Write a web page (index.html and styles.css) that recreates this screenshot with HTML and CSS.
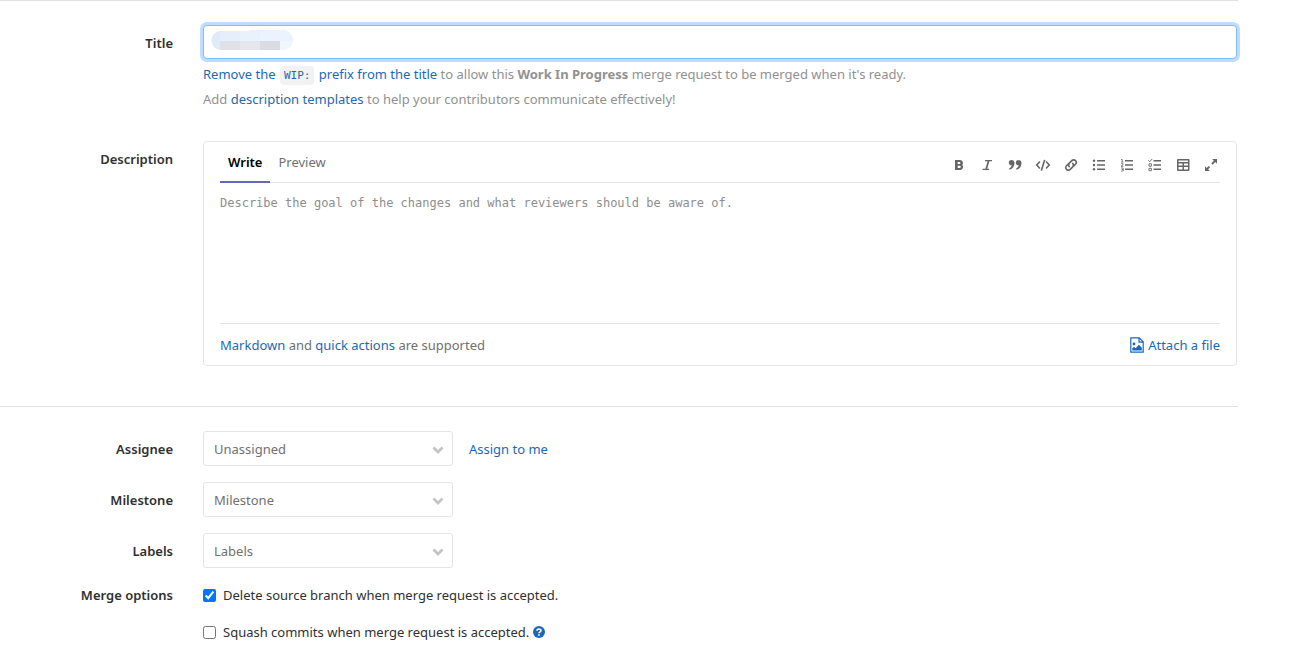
FILE: index.html
```html
<!DOCTYPE html>
<html lang="en">
<head>
<meta charset="utf-8">
<title>New Merge Request</title>
<link rel="stylesheet" href="styles.css">
</head>
<body>
<form class="form">
  <section class="section section-main">
    <div class="row">
      <label class="label" for="title">Title</label>
      <div class="field">
        <div class="title-box">
          <input class="title-input" id="title" type="text">
          <svg class="title-mask" width="82" height="20" viewBox="0 0 82 20" aria-hidden="true">
            <clipPath id="pill"><path d="M10 1h28V0h34a10 10 0 0 1 0 20H10A9.500 9.500 0 0 1 10 1z"/></clipPath>
            <g clip-path="url(#pill)">
              <path fill="#e9f2fc" d="M0 0h82v20H0z"/>
              <path fill="#dfebfa" d="M0 0h9v20H0z"/>
              <path fill="#e5eefa" d="M9 0h20v11H9z"/>
              <path fill="#ebf4fe" d="M49 0h33v11H49z"/>
              <path fill="#f1f6fc" d="M69 11h13v9H69z"/>
              <path fill="#dfe1e6" d="M9 11h20v9H9z"/>
              <path fill="#e5e7ec" d="M29 11h20v9H29z"/>
              <path fill="#d9dce2" d="M49 11h20v9H49z"/>
            </g>
          </svg>
        </div>
        <p class="hint"><a href="#">Remove the <code class="code">WIP:</code> prefix from the title</a> to allow this <strong>Work In Progress</strong> merge request to be merged when it's ready.</p>
        <p class="hint">Add <a href="#">description templates</a> to help your contributors communicate effectively!</p>
      </div>
    </div>
    <div class="row">
      <label class="label label-description" for="description">Description</label>
      <div class="field editor">
        <div class="editor-head">
          <div class="tabs">
            <button class="tab tab-active" type="button">Write</button>
            <button class="tab" type="button">Preview</button>
          </div>
          <div class="toolbar">
            <button class="tool" type="button" aria-label="Bold"><svg class="icon" viewBox="0 0 16 16"><path fill-rule="evenodd" d="M4 3h5a3 3 0 0 1 2.300 4.900A3.100 3.100 0 0 1 9.600 13H4zm2.700 2v2h1.700a1 1 0 0 0 0-2zm0 3.800V11h2a1.100 1.100 0 0 0 0-2.200z"/></svg></button>
            <button class="tool" type="button" aria-label="Italic"><svg class="icon" viewBox="0 0 16 16"><path d="M6 3h7v1.300h-2.600L8.200 11.700H10V13H3.500v-1.300h2.900l2.200-7.400H6z"/></svg></button>
            <button class="tool" type="button" aria-label="Quote"><svg class="icon" viewBox="0 0 16 16"><path d="M4.500 3A2.700 2.700 0 0 0 1.800 5.700c0 1.500 1.100 2.600 2.500 2.600h.4C4.500 9.700 3.700 10.600 2.300 11.300v1.500C5.500 12 7.500 9.500 7.500 6.200 7.500 4.200 6.300 3 4.500 3zm7 0A2.700 2.700 0 0 0 8.800 5.700c0 1.500 1.100 2.600 2.500 2.600h.4c-.2 1.400-1 2.300-2.400 3v1.500c3.200-.8 5.200-3.300 5.200-6.600 0-2-1.200-3.200-3-3.200z"/></svg></button>
            <button class="tool" type="button" aria-label="Code"><svg class="icon line" viewBox="0 0 16 16"><path d="M4.500 5 1.700 8l2.800 3M11.500 5l2.800 3-2.800 3M9.500 3.500l-3 9.500"/></svg></button>
            <button class="tool" type="button" aria-label="Link"><svg class="icon line" viewBox="0 0 16 16"><path d="M6.300 9.700a2.700 2.700 0 0 1 0-3.600l2.500-2.500a2.600 2.600 0 0 1 3.700 3.700l-1.700 1.700M9.700 6.300a2.700 2.700 0 0 1 0 3.600l-2.500 2.500a2.600 2.600 0 0 1-3.700-3.700l1.700-1.700"/></svg></button>
            <button class="tool" type="button" aria-label="Bulleted list"><svg class="icon" viewBox="0 0 16 16"><path d="M6 3h8v1.600H6zm0 4.200h8v1.600H6zm0 4.200h8V13H6z"/><circle cx="3" cy="3.800" r="1.200"/><circle cx="3" cy="8" r="1.200"/><circle cx="3" cy="12.200" r="1.200"/></svg></button>
            <button class="tool" type="button" aria-label="Numbered list"><svg class="icon" viewBox="0 0 16 16"><path d="M6 3h8v1.600H6zm0 4.200h8v1.600H6zm0 4.200h8V13H6z"/><path fill="none" stroke="currentColor" stroke-width=".8" d="M2 2.500h1.200V5M2 5h2.500M2 6.700h2v1.200L2 9.300h2.500M2 11h2.200v3H2M2.600 12.500h1.600"/></svg></button>
            <button class="tool" type="button" aria-label="Task list"><svg class="icon" viewBox="0 0 16 16"><path d="M6.500 3H14v1.600H6.500zm0 4.200H14v1.600H6.500zm0 4.200H14V13H6.500z"/><path fill="none" stroke="currentColor" stroke-width=".9" d="m1.300 3.300 1.400 1.400L5.200 2M2 6.800h2.400v2.400H2zM2 11.300h2.400v2.400H2z"/></svg></button>
            <button class="tool" type="button" aria-label="Table"><svg class="icon" viewBox="0 0 16 16"><path fill-rule="evenodd" d="M3 2h10.500a1 1 0 0 1 1 1v10a1 1 0 0 1-1 1H3a1 1 0 0 1-1-1V3a1 1 0 0 1 1-1zm.5 1.500V5H13V3.500zm0 3v2h4v-2zm5.500 0v2h4v-2zm-5.500 3.500v2.500h4V10zM9 10v2.500h4V10z"/></svg></button>
            <button class="tool" type="button" aria-label="Full screen"><svg class="icon" viewBox="0 0 16 16"><path d="M9.200 2H14v4.800l-1.700-1.700-2.600 2.600-1.400-1.400 2.600-2.600zM2 9.200l1.700 1.700 2-2 1.400 1.400-2 2L6.800 14H2z"/></svg></button>
          </div>
        </div>
        <textarea class="editor-text" id="description" placeholder="Describe the goal of the changes and what reviewers should be aware of."></textarea>
        <div class="editor-foot">
          <span><a href="#">Markdown</a> and <a href="#">quick actions</a> are supported</span>
          <button class="attach" type="button"><svg class="attach-icon" viewBox="0 0 14 16" aria-hidden="true"><path fill="none" stroke="currentColor" stroke-width="1.200" d="M.8.800h8.400l4 4v10.400H.8zM9 .8v4.400h4.200"/><circle cx="4" cy="7" r="1.400"/><path d="M2.300 13.500v-2.300l1.700-1.500 1.600 1.500 3.200-3.400 3 3v2.700z"/></svg>Attach a file</button>
        </div>
      </div>
    </div>
  </section>
  <section class="section section-options">
    <div class="row">
      <label class="label" for="assignee">Assignee</label>
      <div class="field field-inline">
        <div class="select-box"><select class="select" id="assignee"><option>Unassigned</option></select><svg class="chevron" viewBox="0 0 12 8" aria-hidden="true"><path d="m1.500 1.500 4.500 4.500 4.500-4.500"/></svg></div>
        <a href="#">Assign to me</a>
      </div>
    </div>
    <div class="row">
      <label class="label" for="milestone">Milestone</label>
      <div class="field field-inline">
        <div class="select-box"><select class="select" id="milestone"><option>Milestone</option></select><svg class="chevron" viewBox="0 0 12 8" aria-hidden="true"><path d="m1.500 1.500 4.500 4.500 4.500-4.500"/></svg></div>
      </div>
    </div>
    <div class="row">
      <label class="label" for="labels">Labels</label>
      <div class="field field-inline">
        <div class="select-box"><select class="select" id="labels"><option>Labels</option></select><svg class="chevron" viewBox="0 0 12 8" aria-hidden="true"><path d="m1.500 1.500 4.500 4.500 4.500-4.500"/></svg></div>
      </div>
    </div>
    <div class="row">
      <span class="label label-checks" id="merge-options">Merge options</span>
      <div class="field checks" role="group" aria-labelledby="merge-options">
        <div class="check"><input class="check-input" type="checkbox" id="delete-branch" checked><label for="delete-branch">Delete source branch when merge request is accepted.</label></div>
        <div class="check"><input class="check-input" type="checkbox" id="squash"><label for="squash">Squash commits when merge request is accepted.</label><a class="help" href="#" aria-label="Help"><svg class="help-icon" viewBox="0 0 12 12"><circle cx="6" cy="6" r="6" fill="currentColor"/><path fill="none" stroke="#fff" stroke-width="1.600" d="M4 4.700C4 2.500 8 2.500 8 4.600 8 5.900 6 5.800 6 7.300"/><path fill="#fff" d="M5.200 8.200h1.600v1.500H5.200z"/></svg></a></div>
      </div>
    </div>
  </section>
</form>
</body>
</html>
```

FILE: styles.css
```css
* {
  box-sizing: border-box;
}

body {
  margin: 0;
  background: #fff;
  color: #303030;
  font-family: "Noto Sans", "Open Sans", sans-serif;
  font-size: 13px;
  line-height: 20px;
}

a {
  color: #1b69b6;
  text-decoration: none;
}

button,
input,
select,
textarea {
  margin: 0;
  font: inherit;
}

button {
  padding: 0;
  border: 0;
  background: none;
}

.form {
  margin-right: 65px;
}

.section {
  display: flex;
  flex-direction: column;
  border-top: 1px solid #e1e1e1;
}

.section-main {
  gap: 32px;
  padding: 24px 0 40px;
}

.section-options {
  gap: 16px;
  padding: 24px 0;
}

.row {
  display: grid;
  grid-template-columns: 173px minmax(0, 1fr);
  column-gap: 30px;
  padding-right: 1px;
}

.label {
  padding-top: 8px;
  text-align: right;
  font-weight: 600;
}

.label-checks {
  padding-top: 1px;
}

.title-box {
  position: relative;
  margin-bottom: 5px;
}

.title-input {
  display: block;
  width: 100%;
  height: 34px;
  padding: 6px 10px;
  border: 1px solid #80bdff;
  border-radius: 4px;
  outline: 0;
  box-shadow: 0 0 0 3px #bfdeff;
}

.title-mask {
  position: absolute;
  top: 5px;
  left: 8px;
}

.hint {
  margin: 0 0 5px;
  color: #919191;
}

.hint:last-child {
  margin-bottom: 0;
}

.code {
  margin: 0 1px;
  padding: 3px 4px;
  border-radius: 4px;
  background: #f2f2f2;
  color: #1b69b6;
  font-family: "DejaVu Sans Mono", monospace;
  font-size: 11px;
  line-height: 1;
}

.editor {
  padding: 0 16px;
  border: 1px solid #e5e5e5;
  border-radius: 4px;
}

.editor-head {
  display: flex;
  justify-content: space-between;
  align-items: center;
  height: 41px;
  border-bottom: 1px solid #e5e5e5;
}

.tabs {
  display: flex;
  align-self: stretch;
}

.tab {
  height: 41px;
  padding: 0 8px;
  border-bottom: 2px solid transparent;
  color: #707070;
}

.tab-active {
  border-bottom-color: #6666c4;
  color: #000;
  font-weight: 600;
}

.toolbar {
  display: flex;
  gap: 12px;
  padding: 6px 1px 0 0;
}

.tool {
  display: flex;
  color: #666;
}

.icon {
  width: 16px;
  height: 16px;
  fill: currentColor;
}

.line {
  fill: none;
  stroke: currentColor;
  stroke-width: 1.6;
  stroke-linecap: round;
}

.editor-text {
  display: block;
  width: 100%;
  height: 141px;
  padding: 10px 0;
  border: 0;
  border-bottom: 1px solid #e5e5e5;
  outline: 0;
  resize: none;
  font-family: "DejaVu Sans Mono", monospace;
  font-size: 12px;
}

.editor-text::placeholder {
  color: #8e8e8e;
}

.editor-foot {
  display: flex;
  justify-content: space-between;
  align-items: center;
  height: 41px;
  color: #707070;
}

.attach {
  display: flex;
  align-items: center;
  gap: 4px;
  color: #1b69b6;
}

.attach-icon {
  width: 14px;
  height: 16px;
  fill: currentColor;
}

.field-inline {
  display: flex;
  align-items: center;
  gap: 16px;
}

.select-box {
  position: relative;
  width: 250px;
}

.select {
  display: block;
  width: 100%;
  height: 35px;
  padding: 0 10px;
  border: 1px solid #e5e5e5;
  border-radius: 3px;
  background: #fff;
  color: #707070;
  appearance: none;
}

.chevron {
  position: absolute;
  top: 15px;
  right: 9px;
  width: 12px;
  height: 8px;
  fill: none;
  stroke: #c4c4c4;
  stroke-width: 2.8;
  pointer-events: none;
}

.checks {
  display: flex;
  flex-direction: column;
  gap: 17px;
  padding-top: 1px;
}

.check {
  display: flex;
  align-items: center;
}

.check-input {
  width: 13px;
  height: 13px;
  margin-right: 7px;
  accent-color: #0075ff;
}

.help {
  display: flex;
  margin-left: 4px;
}

.help-icon {
  width: 12px;
  height: 12px;
}
```
